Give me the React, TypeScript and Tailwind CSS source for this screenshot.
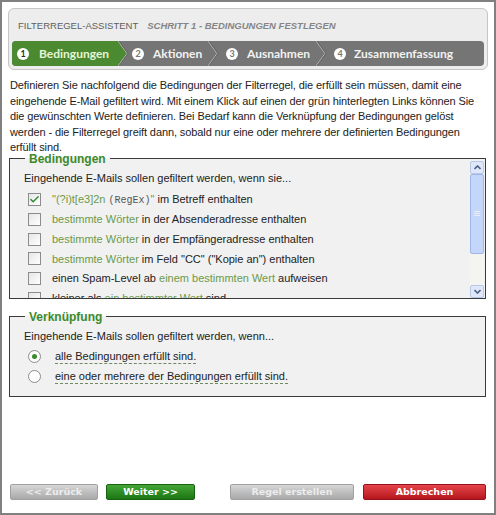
import { Check } from 'lucide-react';

const sans = "font-['Liberation_Sans',Arial,sans-serif]";

function StepNum({ n, active }: { n: number; active?: boolean }) {
  return (
    <span
      className={`flex h-[12px] w-[12px] shrink-0 items-center justify-center rounded-full bg-white text-[9px] font-bold leading-none ${
        active ? 'text-[#1d3a12]' : 'text-[#777]'
      }`}
    >
      {n}
    </span>
  );
}

function Chevron({ green }: { green?: boolean }) {
  return (
    <svg width="12" height="25" viewBox="0 0 12 25" className="shrink-0">
      {green && <polygon points="0,0 9,12.5 0,25" fill="#4b8a30" />}
      <polyline points="0,0 9,12.5 0,25" fill="none" stroke="#b5b5b5" strokeWidth="1" />
      <polyline points="1,0 10,12.5 1,25" fill="none" stroke="#5e5e5e" strokeWidth="0.8" />
    </svg>
  );
}

function Box({ checked }: { checked?: boolean }) {
  return (
    <span className="flex h-[13px] w-[13px] shrink-0 items-center justify-center border border-[#8c8c8c] bg-gradient-to-br from-[#e6e6e6] to-white">
      {checked && <Check size={11} strokeWidth={3} className="text-[#2f8a2f]" />}
    </span>
  );
}

function Radio({ on }: { on?: boolean }) {
  return (
    <span className="flex h-[13px] w-[13px] shrink-0 items-center justify-center rounded-full border border-[#8c8c8c] bg-white">
      {on && <span className="h-[5px] w-[5px] rounded-full bg-[#3c8a2e]" />}
    </span>
  );
}

const G = ({ children }: { children: React.ReactNode }) => (
  <span className="text-[#6b9a4b]">{children}</span>
);

export default function App() {
  const rows: { checked?: boolean; content: React.ReactNode }[] = [
    {
      checked: true,
      content: (
        <>
          <G>
            "(?i)t[e3]{2}n{' '}
            <span className="font-['Liberation_Mono',monospace] text-[10px] text-[#555]">(RegEx)</span>"
          </G>{' '}
          im Betreff enthalten
        </>
      ),
    },
    { content: <><G>bestimmte Wörter</G> in der Absenderadresse enthalten</> },
    { content: <><G>bestimmte Wörter</G> in der Empfängeradresse enthalten</> },
    { content: <><G>bestimmte Wörter</G> im Feld "CC" ("Kopie an") enthalten</> },
    { content: <>einen Spam-Level ab <G>einem bestimmten Wert</G> aufweisen</> },
    { content: <>kleiner als <G>ein bestimmter Wert</G> sind.</> },
  ];

  return (
    <div className={`flex h-[515px] w-[496px] flex-col border-2 border-[#808080] bg-white ${sans} text-[11px] text-[#222]`}>
      {/* header */}
      <div className="ml-[6px] mt-[6px] flex h-[62px] w-[480px] flex-col rounded-[6px] border border-[#c6c6c6] bg-[#ededed]">
        <div className="flex h-[32px] items-center gap-[9px] whitespace-nowrap pl-[9px] pt-[2px] text-[9.5px]">
          <span className="text-[#5e5e5e]">FILTERREGEL-ASSISTENT</span>
          <span className="font-bold italic text-[#858585]">SCHRITT 1 - BEDINGUNGEN FESTLEGEN</span>
        </div>
        <div className="mx-[3px] flex h-[25px] overflow-hidden rounded-[4px] bg-[#757575] font-['Lato',sans-serif] text-[12px] font-bold text-[#f2f2f2]">
          <div className="flex w-[106px] items-center gap-[10px] bg-[#4b8a30] pl-[5px] text-[#e6f5d6]">
            <StepNum n={1} active />
            Bedingungen
          </div>
          <Chevron green />
          <div className="flex w-[78px] items-center gap-[9px] pl-[2px]">
            <StepNum n={2} />
            Aktionen
          </div>
          <Chevron />
          <div className="flex w-[96px] items-center gap-[9px] pl-[6px]">
            <StepNum n={3} />
            Ausnahmen
          </div>
          <Chevron />
          <div className="flex flex-1 items-center gap-[8px] pl-[6px]">
            <StepNum n={4} />
            Zusammenfassung
          </div>
        </div>
      </div>

      {/* intro */}
      <p className="mt-[8px] whitespace-nowrap px-[8px] leading-[15.5px] tracking-[-0.1px]">
        Definieren Sie nachfolgend die Bedingungen der Filterregel, die erfüllt sein müssen, damit eine
        <br />
        eingehende E-Mail gefiltert wird. Mit einem Klick auf einen der grün hinterlegten Links können Sie
        <br />
        die gewünschten Werte definieren. Bei Bedarf kann die Verknüpfung der Bedingungen gelöst
        <br />
        werden - die Filterregel greift dann, sobald nur eine oder mehrere der definierten Bedingungen
        <br />
        erfüllt sind.
      </p>

      {/* conditions */}
      <fieldset className="ml-[7px] mt-[1px] w-[477px] border border-[#3a3a3a] bg-[#f1f1f1]">
        <legend className="ml-[15px] px-[4px] text-[12px] font-bold leading-[4px] text-[#3d8a2a]">
          Bedingungen
        </legend>
        <div className="flex h-[137px]">
          <div className="flex-1 overflow-hidden pl-[14px] pt-[10px]">
            <div className="leading-[15px]">Eingehende E-Mails sollen gefiltert werden, wenn sie...</div>
            <div className="mt-[4.5px] pl-[4px]">
              {rows.map((r, i) => (
                <div key={i} className="flex h-[19.7px] items-center gap-[11px]">
                  <Box checked={r.checked} />
                  <span className="whitespace-nowrap">{r.content}</span>
                </div>
              ))}
            </div>
          </div>
          <div className="mr-[1px] flex w-[14px] flex-col bg-[#f4f4f0]">
            <div className="flex h-[13px] items-center justify-center rounded-[2px] border border-[#b8c8e8] bg-[#dfe8fb]">
              <svg width="7" height="5" viewBox="0 0 7 5">
                <polyline points="0.5,4 3.5,1 6.5,4" fill="none" stroke="#4d6185" strokeWidth="1.6" />
              </svg>
            </div>
            <div className="flex h-[80px] items-center justify-center rounded-[2px] border border-[#9fb6e6] bg-[#c5d6fb]">
              <div className="flex flex-col gap-[1px]">
                <span className="h-px w-[6px] bg-[#e8eefc]" />
                <span className="h-px w-[6px] bg-[#e8eefc]" />
                <span className="h-px w-[6px] bg-[#e8eefc]" />
              </div>
            </div>
            <div className="flex-1" />
            <div className="flex h-[13px] items-center justify-center rounded-[2px] border border-[#b8c8e8] bg-[#dfe8fb]">
              <svg width="7" height="5" viewBox="0 0 7 5">
                <polyline points="0.5,1 3.5,4 6.5,1" fill="none" stroke="#4d6185" strokeWidth="1.6" />
              </svg>
            </div>
          </div>
        </div>
      </fieldset>

      {/* link */}
      <fieldset className="ml-[7px] mt-[16px] w-[477px] border border-[#3a3a3a] bg-[#f1f1f1]">
        <legend className="ml-[15px] px-[4px] text-[12px] font-bold leading-[4px] text-[#3d8a2a]">
          Verknüpfung
        </legend>
        <div className="pb-[9px] pl-[14px] pt-[10px]">
          <div className="leading-[15px]">Eingehende E-Mails sollen gefiltert werden, wenn...</div>
          <div className="mt-[3px] pl-[4px]">
            <div className="flex h-[20px] items-center gap-[14px]">
              <Radio on />
              <span className="border-b border-dashed border-[#6f8a60] leading-[14px]">alle Bedingungen erfüllt sind.</span>
            </div>
            <div className="flex h-[20px] items-center gap-[14px]">
              <Radio />
              <span className="border-b border-dashed border-[#6f8a60] leading-[14px]">
                eine oder mehrere der Bedingungen erfüllt sind.
              </span>
            </div>
          </div>
        </div>
      </fieldset>

      {/* buttons */}
      <div className="mt-auto flex px-[8px] pb-[13px] font-['DejaVu_Sans',sans-serif] text-[9.5px] font-bold">
        <button className="flex h-[16px] w-[88px] items-center justify-center rounded-[2px] border border-[#a0a0a0] bg-linear-to-b from-[#d6d6d6] to-[#a9a9a9] text-[#ececec]">
          &lt;&lt; Zurück
        </button>
        <button className="ml-[8px] flex h-[16px] w-[89px] items-center justify-center rounded-[2px] border border-[#17620f] bg-linear-to-b from-[#43a636] to-[#1c7614] text-white">
          Weiter &gt;&gt;
        </button>
        <button className="ml-[35px] flex h-[16px] w-[124px] items-center justify-center rounded-[2px] border border-[#a0a0a0] bg-linear-to-b from-[#d6d6d6] to-[#a9a9a9] text-[#ececec]">
          Regel erstellen
        </button>
        <button className="ml-[9px] flex h-[16px] w-[123px] items-center justify-center rounded-[2px] border border-[#99121a] bg-linear-to-b from-[#e5444a] to-[#b5141c] text-white">
          Abbrechen
        </button>
      </div>
    </div>
  );
}
